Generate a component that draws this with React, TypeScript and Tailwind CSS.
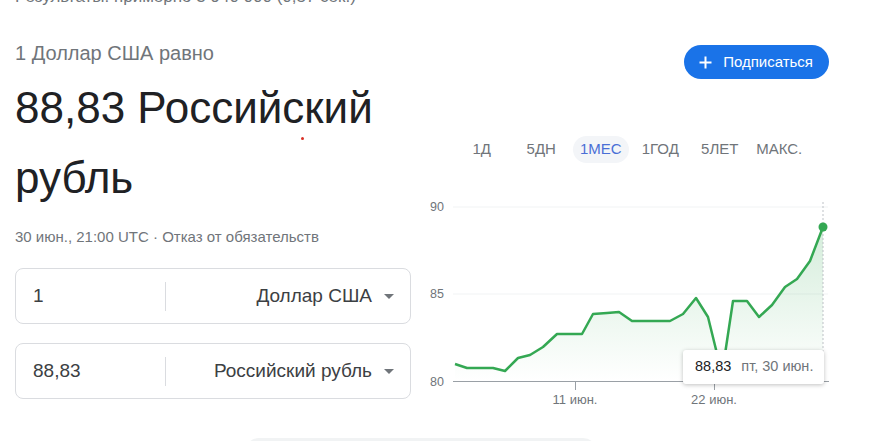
import React from 'react';

const POINTS: [number, number][] = [
  [455, 364], [467, 368], [493, 368], [505, 371], [518, 358], [530, 355], [543, 347],
  [557, 334], [582, 334], [593, 314], [607, 313], [619, 312], [632, 321], [670, 321],
  [683, 314], [696, 298], [708, 317], [722, 374], [733, 301], [747, 301], [759, 317],
  [772, 305], [785, 287], [797, 279], [810, 261], [823, 227],
];

const TABS = ['1Д', '5ДН', '1МЕС', '1ГОД', '5ЛЕТ', 'МАКС.'];

function CurrencyRow({ amount, currency }: { amount: string; currency: string }) {
  return (
    <div className="h-[56px] border border-[#dadce0] rounded-[8px] flex items-center">
      <div className="w-[149px] pl-[17px] text-[19px] text-[#3c4043]">{amount}</div>
      <div className="h-[29px] w-px bg-[#dadce0]" />
      <div className="flex-1 flex items-center justify-end gap-[12px] pr-[16px]">
        <span className="text-[19px] text-[#3c4043]">{currency}</span>
        <span className="w-0 h-0 border-l-[5px] border-r-[5px] border-t-[5px] border-l-transparent border-r-transparent border-t-[#70757a]" />
      </div>
    </div>
  );
}

function Chart() {
  const line = POINTS.map(p => p.join(',')).join(' ');
  const area = `${POINTS[0][0]},381 ${line} ${POINTS[POINTS.length - 1][0]},381`;
  return (
    <svg width="480" height="230" viewBox="411 195 480 230" className="block">
      <defs>
        <linearGradient id="fill" x1="0" y1="220" x2="0" y2="381" gradientUnits="userSpaceOnUse">
          <stop offset="0" stopColor="#34a853" stopOpacity="0.22" />
          <stop offset="1" stopColor="#34a853" stopOpacity="0" />
        </linearGradient>
      </defs>
      <line x1="453" y1="207" x2="828" y2="207" stroke="#f1f3f4" />
      <line x1="453" y1="294" x2="828" y2="294" stroke="#f1f3f4" />
      <text x="430" y="211" fontSize="12.5" fill="#70757a">90</text>
      <text x="430" y="298" fontSize="12.5" fill="#70757a">85</text>
      <text x="430" y="386" fontSize="12.5" fill="#70757a">80</text>
      <polygon points={area} fill="url(#fill)" />
      <line x1="823" y1="202" x2="823" y2="381" stroke="#bdc1c6" strokeDasharray="2 2" />
      <polyline points={line} fill="none" stroke="#34a853" strokeWidth="2.5" strokeLinejoin="round" />
      <line x1="453" y1="381.5" x2="829" y2="381.5" stroke="#9aa0a6" />
      <line x1="575.5" y1="381" x2="575.5" y2="390" stroke="#9aa0a6" />
      <line x1="714.5" y1="381" x2="714.5" y2="390" stroke="#9aa0a6" />
      <text x="575" y="404" fontSize="13" fill="#70757a" textAnchor="middle">11 июн.</text>
      <text x="714" y="404" fontSize="13" fill="#70757a" textAnchor="middle">22 июн.</text>
      <circle cx="823" cy="227" r="4.5" fill="#34a853" />
    </svg>
  );
}

export default function App() {
  return (
    <div className="relative w-[891px] h-[441px] overflow-hidden bg-white font-['Liberation_Sans',Arial,sans-serif]">
      <div className="-mt-[13px] pl-[15px] h-[17px] text-[17px] leading-[20px] text-[#70757a] whitespace-nowrap">
        Результаты: примерно 3 940 000 (0,57 сек.)
      </div>

      <div className="flex">
        <div className="w-[396px] ml-[15px]">
          <div className="pt-[37px] text-[20px] leading-[24px] text-[#70757a]">1 Доллар США равно</div>
          <div className="mt-[8px] text-[44px] leading-[70px] text-[#202124]">88,83 Российский рубль</div>
          <div className="mt-[14px] text-[15px] leading-[20px] text-[#70757a]">30 июн., 21:00 UTC · Отказ от обязательств</div>
          <div className="mt-[21px] flex flex-col gap-[19px]">
            <CurrencyRow amount="1" currency="Доллар США" />
            <CurrencyRow amount="88,83" currency="Российский рубль" />
          </div>
        </div>

        <div className="flex-1 relative">
          <div className="flex justify-end pr-[62px] pt-[41px]">
            <button className="h-[34px] pl-[15px] pr-[16px] rounded-full bg-[#1a73e8] text-white text-[15px] flex items-center gap-[11px]">
              <svg width="13" height="13" viewBox="0 0 13 13">
                <path d="M6.5 0.5v12M0.5 6.5h12" stroke="white" strokeWidth="2" />
              </svg>
              Подписаться
            </button>
          </div>
          <div className="mt-[57px] ml-[41px] w-[357px] grid grid-cols-6">
            {TABS.map(t => (
              <div key={t} className="flex justify-center">
                <span className={`h-[27px] px-[7px] rounded-full flex items-center text-[15px] ${t === '1МЕС' ? 'bg-[#f3f5f8] text-[#4a6fd6]' : 'text-[#70757a]'}`}>{t}</span>
              </div>
            ))}
          </div>
          <div className="mt-[32px] relative">
            <Chart />
            <div className="absolute left-[272px] top-[155px] w-[141px] h-[34px] bg-white rounded-[3px] shadow-[0_1px_4px_rgba(0,0,0,0.25)] flex items-center pl-[12px] gap-[10px] text-[14.5px] whitespace-nowrap">
              <span className="text-[#202124]">88,83</span>
              <span className="text-[#70757a]">пт, 30 июн.</span>
            </div>
          </div>
        </div>
      </div>

      <div className="absolute left-[301px] top-[137px] w-[3px] h-[3px] rounded-full bg-[#d93025]" />
      <div className="absolute left-[245px] top-[438px] w-[352px] h-[30px] rounded-[14px] bg-[#f1f3f4]" />
    </div>
  );
}
